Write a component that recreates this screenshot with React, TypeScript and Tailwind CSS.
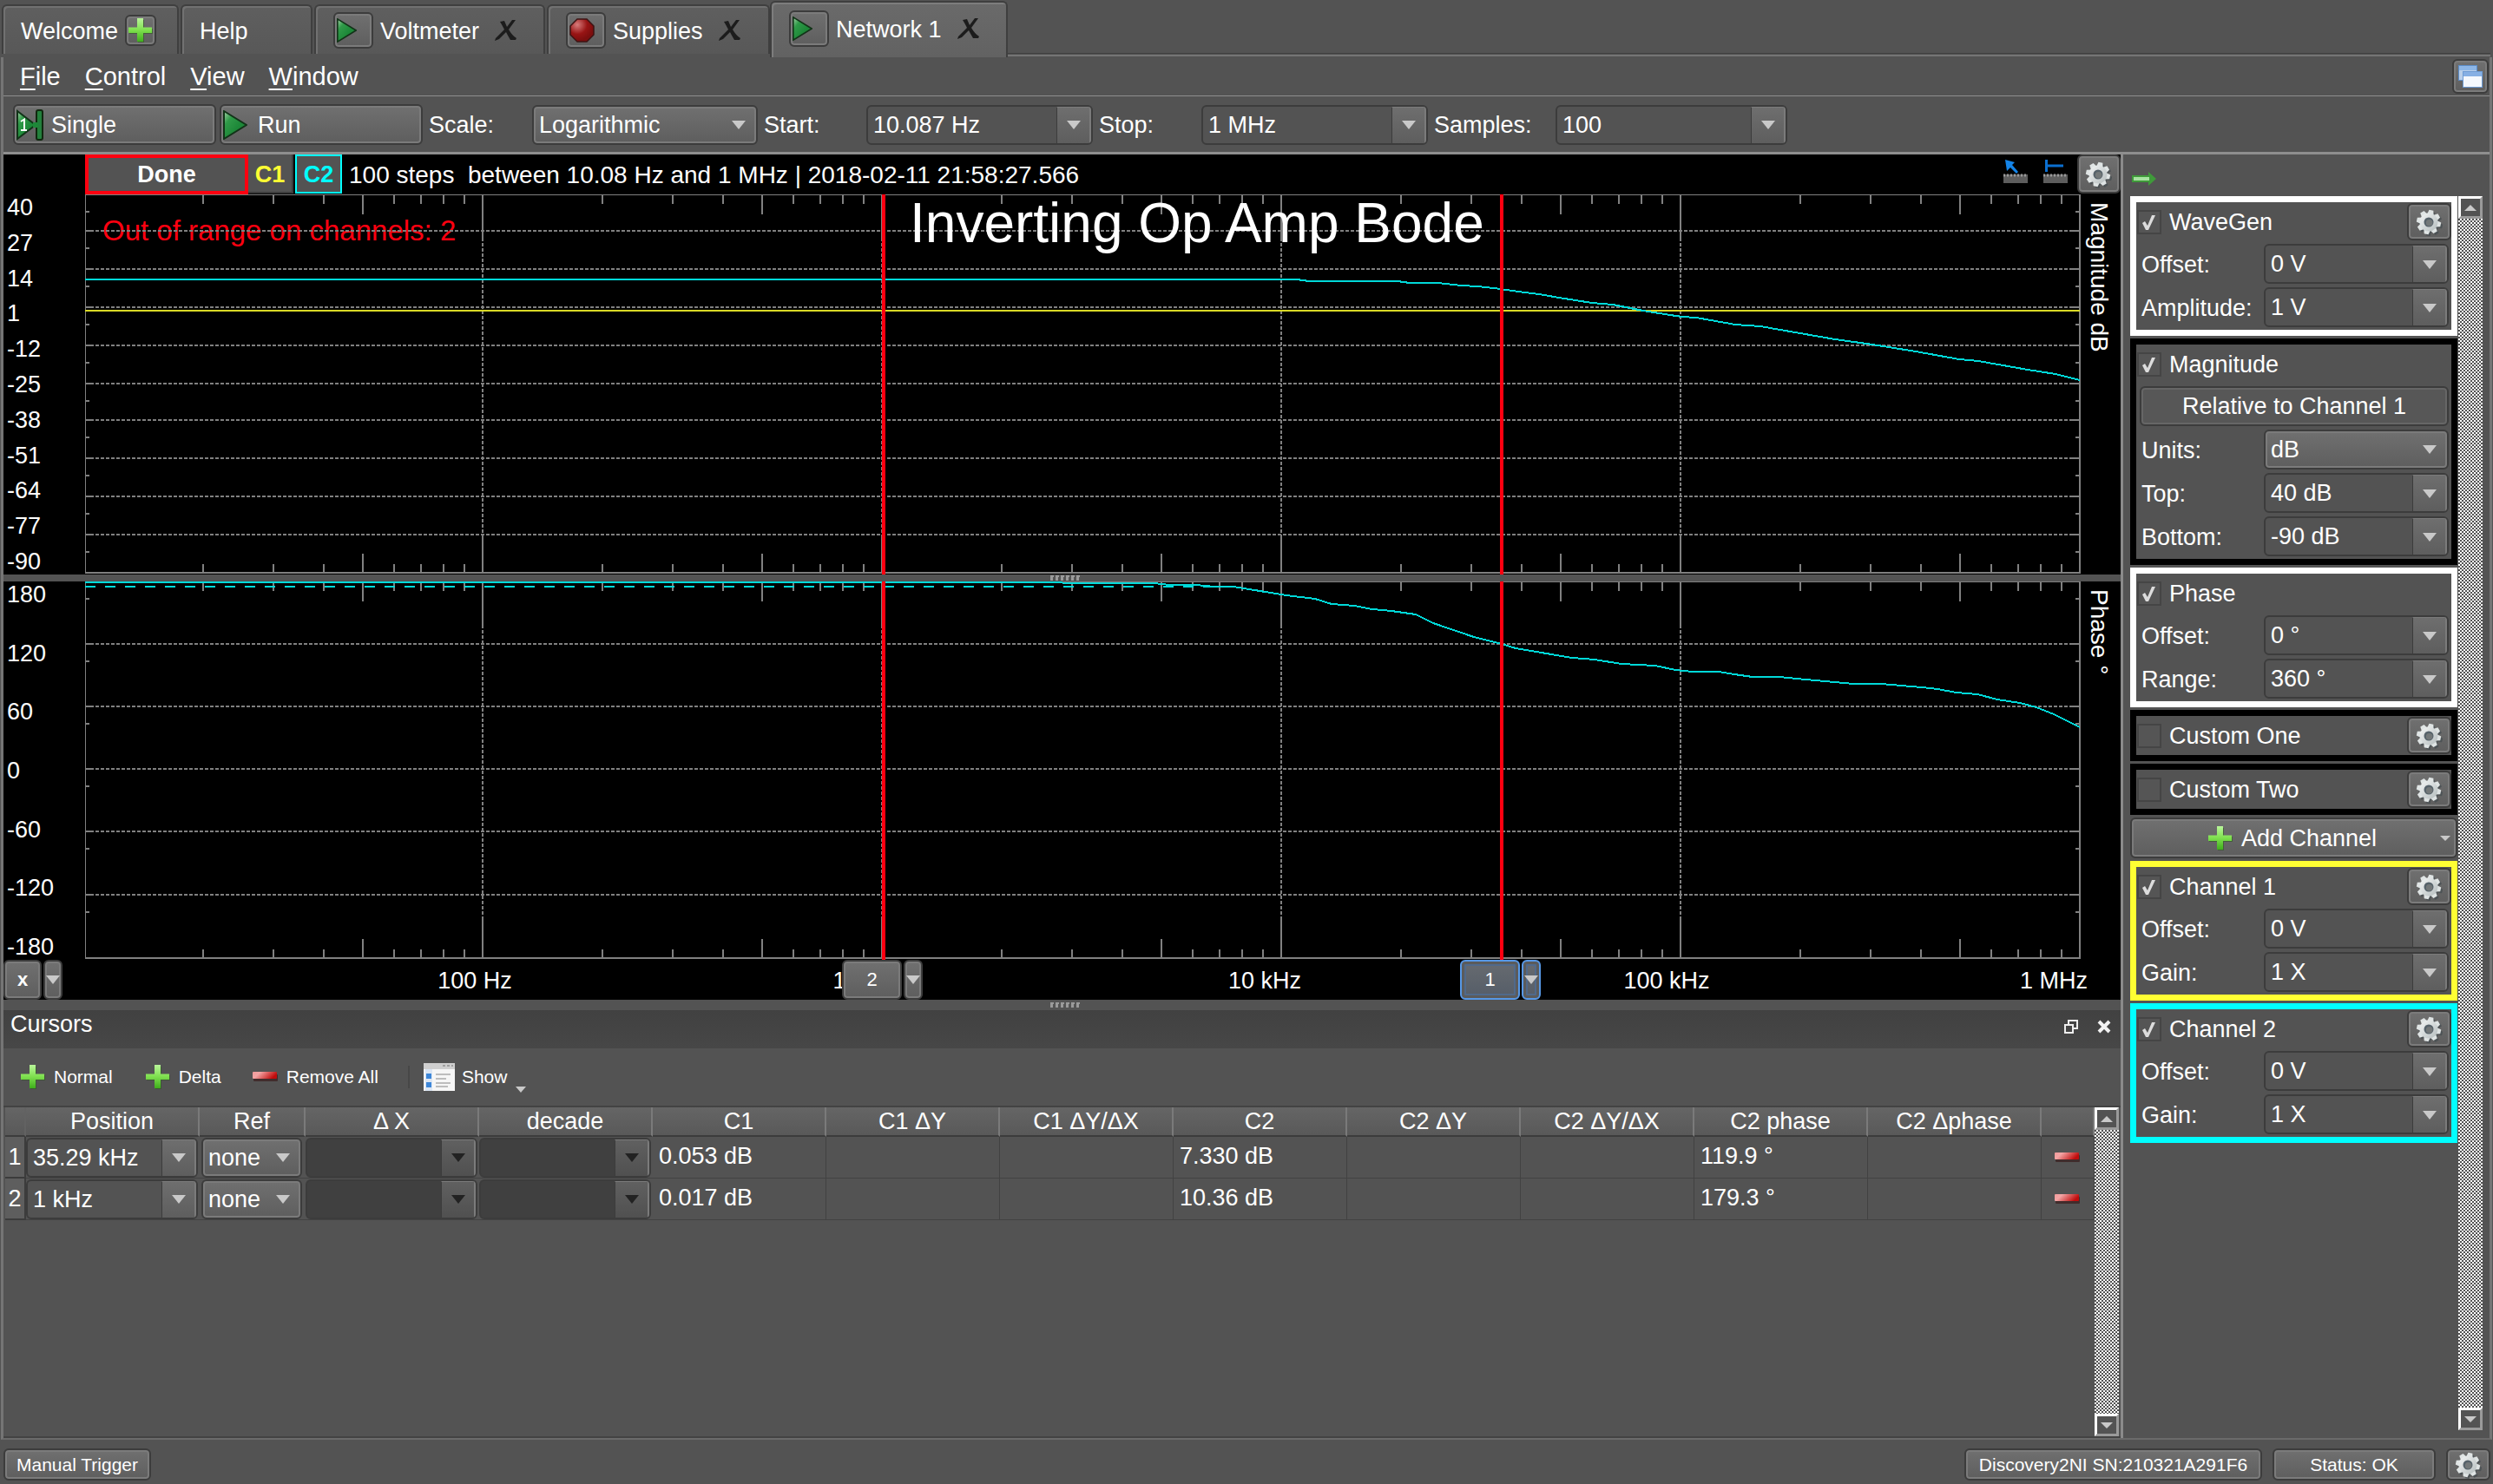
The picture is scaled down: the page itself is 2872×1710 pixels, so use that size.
import { useId } from "react";
import type { ReactNode } from "react";

const RAISED =
  "rounded-md border-2 border-[#3c3c3c] bg-linear-to-b from-[#707070] to-[#5e5e5e] shadow-[inset_0_0_0_2px_#7b7b7b]";

/* ---------- icons ---------- */

function Gear() {
  return (
    <svg viewBox="0 0 32 32" className="h-8 w-8 shrink-0" aria-hidden="true">
      <defs>
        <linearGradient id="gearFill" x1="0" y1="0" x2="1" y2="1">
          <stop offset="0" stopColor="#f4f6f6" />
          <stop offset="1" stopColor="#b4bcbd" />
        </linearGradient>
      </defs>
      <g transform="translate(17 18)" fill="#444c50" opacity="0.7">
        {[0, 45, 90, 135, 180, 225, 270, 315].map((a) => (
          <rect key={a} x="-2.6" y="-14" width="5.2" height="7" rx="1" transform={`rotate(${a + 12})`} />
        ))}
        <circle r="10" />
      </g>
      <g transform="translate(15 16)" fill="url(#gearFill)">
        {[0, 45, 90, 135, 180, 225, 270, 315].map((a) => (
          <path key={a} d="M-4-8 L-2.500-14 H2.500 L4-8Z" fill="#dfe4e4" transform={`rotate(${a + 12})`} />
        ))}
        <circle r="10.500" />
        <circle r="5.500" fill="#56626a" />
        <circle r="3.800" cx="0.600" cy="0.800" fill="#737879" />
      </g>
    </svg>
  );
}

function Plus() {
  return (
    <svg viewBox="0 0 28 28" className="h-7 w-7 shrink-0" aria-hidden="true">
      <defs>
        <linearGradient id="plusFill" x1="0" y1="0" x2="0" y2="1">
          <stop offset="0" stopColor="#b9f59a" />
          <stop offset="0.5" stopColor="#7fe04f" />
          <stop offset="1" stopColor="#3fae1c" />
        </linearGradient>
      </defs>
      <path d="M11 2H18V12H28V18H18V28H11V18H1V12H11Z" fill="#2f5a20" opacity="0.6" />
      <path d="M10 0H17V10.500H27V17H17V27H10V17H0V10.500H10Z" fill="url(#plusFill)" />
    </svg>
  );
}

function Minus() {
  return (
    <svg viewBox="0 0 30 12" className="h-3 w-[30px] shrink-0" aria-hidden="true">
      <defs>
        <linearGradient id="minusFill" x1="0" y1="0" x2="1" y2="0.3">
          <stop offset="0" stopColor="#f09a9a" />
          <stop offset="0.3" stopColor="#f3a5a5" />
          <stop offset="1" stopColor="#c00c0c" />
        </linearGradient>
      </defs>
      <rect x="1" y="3" width="28" height="8" rx="1" fill="#3a1c1c" opacity="0.7" />
      <rect width="28" height="8" rx="1" fill="url(#minusFill)" />
    </svg>
  );
}

function Play({ big = false }: { big?: boolean }) {
  return (
    <svg viewBox="0 0 28 34" className={big ? "h-[34px] w-7" : "h-7 w-[23px]"} aria-hidden="true">
      <defs>
        <linearGradient id="playFill" x1="0" y1="0" x2="0.6" y2="0.6">
          <stop offset="0" stopColor="#a5d3a8" />
          <stop offset="0.45" stopColor="#2f9a48" />
          <stop offset="1" stopColor="#1d8838" />
        </linearGradient>
      </defs>
      <path d="M1 1 L27 17 L1 33Z" fill="url(#playFill)" stroke="#123318" strokeWidth="2" />
    </svg>
  );
}

function SingleIcon() {
  return (
    <svg viewBox="0 0 32 36" className="h-9 w-8" aria-hidden="true">
      <path d="M1 2 L22 18 L1 34Z" fill="url(#playFill)" stroke="#123318" strokeWidth="2" />
      <rect x="23" y="1" width="7" height="34" rx="2" fill="#23803c" stroke="#10280f" strokeWidth="2" />
      <rect x="19" y="15" width="6" height="6" fill="#1d8838" />
      <path d="M5 14 L9 11.500V24M5 24H12" fill="none" stroke="#fff" strokeWidth="2" />
    </svg>
  );
}

function StopIcon() {
  return (
    <svg viewBox="0 0 30 30" className="h-[30px] w-[30px]" aria-hidden="true">
      <defs>
        <radialGradient id="stopFill" cx="0.3" cy="0.25" r="0.7">
          <stop offset="0" stopColor="#d77c7c" />
          <stop offset="0.6" stopColor="#981414" />
          <stop offset="1" stopColor="#7c0e0e" />
        </radialGradient>
      </defs>
      <path d="M9 2H20L28 10V20L20 28H9L1 20V10Z" fill="url(#stopFill)" stroke="#3d1414" strokeWidth="1.500" />
    </svg>
  );
}

function CloseX() {
  return (
    <svg viewBox="0 0 26 26" className="h-[26px] w-[26px]" aria-hidden="true">
      <path d="M24 1 L16 12 Q20 19 25 22 L24 24 L18 24 Q15 19 13 15 L5 23 L0 25 L1 22 L11 12 Q8 6 6 3 L11 2 L14 9 L20 1Z" fill="#1c1c1c" />
    </svg>
  );
}

function Down({ dark = false }: { dark?: boolean }) {
  return (
    <svg viewBox="0 0 16 10" className="h-[10px] w-4 shrink-0" aria-hidden="true">
      <path d="M0 0H16L8 10Z" fill={dark ? "#222222" : "#c9c9c9"} />
    </svg>
  );
}

/* ---------- controls ---------- */

function Combo({ label, value, id, disabled = false }: { label?: string; value: string; id?: string; disabled?: boolean }) {
  return (
    <div className={`flex h-[46px] w-full min-w-0 overflow-hidden rounded-md border-2 border-[#3c3c3c] ${disabled ? "bg-[#404040]" : "bg-[#535353]"}`}>
      <input id={id} aria-label={label} defaultValue={value} disabled={disabled} className="w-0 min-w-0 flex-1 bg-transparent pl-1.5 text-[27px] leading-[30px] text-white outline-none" />
      <button type="button" aria-label="Show values" disabled={disabled} className={`flex w-[40px] shrink-0 items-center justify-center border-t border-r-2 border-l border-t-[#7b7b7b] border-r-[#7b7b7b] border-l-[#3c3c3c] bg-linear-to-b ${disabled ? "from-[#606060] to-[#505050]" : "from-[#6e6e6e] to-[#5e5e5e]"}`}>
        <Down dark={disabled} />
      </button>
    </div>
  );
}

function Select({ id, label, value }: { id?: string; label?: string; value: string }) {
  return (
    <div className={`relative h-[46px] w-full ${RAISED}`}>
      <select id={id} aria-label={label} defaultValue={value} className="h-full w-full appearance-none bg-transparent pl-1.5 text-[27px] text-white outline-none">
        <option>{value}</option>
      </select>
      <span className="pointer-events-none absolute inset-y-0 right-3 flex items-center">
        <Down />
      </span>
    </div>
  );
}

function ToolField({ label, value, labelWidth, width, select = false }: { label: string; value: string; labelWidth: string; width: string; select?: boolean }) {
  const id = useId();
  return (
    <div className="ml-[7px] flex items-center">
      <label htmlFor={id} className={labelWidth}>{label}</label>
      <div className={width}>{select ? <Select id={id} value={value} /> : <Combo id={id} value={value} />}</div>
    </div>
  );
}

function Field({ label, value, select = false }: { label: string; value: string; select?: boolean }) {
  const id = useId();
  return (
    <div className="flex items-center">
      <label htmlFor={id} className="w-[147px] shrink-0 pt-0.5 pl-[6px]">{label}</label>
      <div className="mr-[3px] min-w-0 flex-1">{select ? <Select id={id} value={value} /> : <Combo id={id} value={value} />}</div>
    </div>
  );
}

function Panel({ title, color, checked = true, gear = false, children }: { title: string; color: string; checked?: boolean; gear?: boolean; children?: ReactNode }) {
  return (
    <section className={`border-[7px] bg-[#535353] ${color}`}>
      <div className="flex h-[45px] items-center justify-between">
        <label className="flex items-center gap-[9px] pl-px">
          <span className="relative flex h-7 w-7">
            <input type="checkbox" defaultChecked={checked} className="peer h-7 w-7 appearance-none border-2 border-[#454545] bg-[#555555]" />
            <svg viewBox="0 0 28 28" className="pointer-events-none absolute inset-0 hidden peer-checked:block" aria-hidden="true">
              <path d="M6 15 L9 13 L12 18 L17 6 L21 6 L13 23 L10 23Z" fill="#dcdcdc" />
            </svg>
          </span>
          <span className="pt-px">{title}</span>
        </label>
        {gear && (
          <button type="button" aria-label={`${title} settings`} className={`flex h-[43px] w-[51px] items-center justify-center ${RAISED}`}>
            <Gear />
          </button>
        )}
      </div>
      {children && <div className="flex flex-col gap-1 pt-[3px] pb-[3px]">{children}</div>}
    </section>
  );
}

function Scrollbar() {
  const btn = "flex h-[26px] w-full items-center justify-center border-[3px] border-t-white border-l-white border-r-[#9a9a9a] border-b-[#9a9a9a] bg-[#535353]";
  return (
    <div className="flex w-7 shrink-0 flex-col bg-[conic-gradient(#535353_25%,#ffffff_0_50%,#535353_0_75%,#ffffff_0)] bg-[length:4px_4px]">
      <button type="button" aria-label="Scroll up" className={btn}>
        <svg viewBox="0 0 14 7" className="h-[7px] w-[14px]"><path d="M0 7H14L7 0Z" fill="#c9c9c9" /></svg>
      </button>
      <div className="flex-1" />
      <button type="button" aria-label="Scroll down" className={btn}>
        <svg viewBox="0 0 14 7" className="h-[7px] w-[14px]"><path d="M0 0H14L7 7Z" fill="#c9c9c9" /></svg>
      </button>
    </div>
  );
}

function Tab({ icon, title, width }: { icon: ReactNode; title: string; width: string }) {
  return (
    <div className={`flex h-[57px] items-center rounded-t-md border-x-2 border-t-2 border-[#3f3f3f] bg-linear-to-b from-[#5f5f5f] to-[#585858] pl-5 shadow-[inset_2px_2px_0_#717171] ${width}`}>
      <button type="button" aria-label={`Run ${title}`} className={`flex h-[42px] w-[46px] items-center pl-0.5 ${RAISED}`}>{icon}</button>
      <button type="button" className="ml-2 pt-0.5">{title}</button>
      <button type="button" aria-label={`Close ${title}`} className="ml-[18px]"><CloseX /></button>
    </div>
  );
}

/* ---------- plots ---------- */

const DECADE = 460;
const DECADES = [0, 1, 2, 3, 4];
const CURSORS = [920, 1632];

function Grid({ bottom, rows }: { bottom: number; rows: number[] }) {
  return (
    <g stroke="#808080" strokeWidth="2" fill="none">
      {rows.map((y) => (
        <g key={y}>
          <path d={`M0 ${y}H2298`} strokeDasharray="4 2" />
          <path d={`M0 ${y}H8M2286 ${y}H2298`} />
        </g>
      ))}
      {[0, ...rows].map((y) => (
        <path key={y} d={`M0 ${y + 20}H5M2293 ${y + 20}H2298`} />
      ))}
      {DECADES.map((d) => {
        const x0 = -2 + d * DECADE;
        return (
          <g key={d}>
            {[2, 3, 4, 5, 6, 7, 8, 9].map((k) => {
              const x = Math.round(x0 + DECADE * Math.log10(k));
              const h = k === 5 ? 22 : 10;
              return <path key={k} d={`M${x} 1V${h + 1}M${x} ${bottom}V${bottom - h}`} />;
            })}
            {d > 0 && (
              <>
                <path d={`M${x0} 1V50M${x0} ${bottom}V${bottom - 44}`} />
                <path d={`M${x0} 50V${bottom - 44}`} strokeDasharray="4 2" />
              </>
            )}
          </g>
        );
      })}
      <path d={`M0 0.500H2299M0.500 0V${bottom}`} strokeWidth="1" />
      <path d={`M0 ${bottom}H2299M2298 0V${bottom}`} />
    </g>
  );
}

function CursorLines({ bottom }: { bottom: number }) {
  return (
    <g stroke="#ff0010" strokeWidth="4">
      {CURSORS.map((x) => (
        <path key={x} d={`M${x} 0V${bottom}`} />
      ))}
    </g>
  );
}

const MAG =
  "0,98 1396,98 1410,100 1512,100 1526,102 1559,102 1585,105 1604,106 1631,109 1651,112 1675,115 1698,119 1736,125 1760,127 1795,134 1826,139 1840,141 1856,142 1901,150 1930,152 2016,167 2038,170 2059,173 2109,181 2159,190 2181,192 2238,202 2270,207 2298,214";
const PHASE =
  "0,1 1119,1 1132,2 1232,2 1249,4 1280,4 1301,6 1323,6 1384,16 1417,20 1436,26 1462,28 1483,32 1505,34 1533,38 1553,48 1600,64 1632,72 1648,77 1713,88 1739,90 1770,95 1809,97 1832,102 1852,104 1882,104 1900,107 1921,110 1952,110 1982,113 2038,118 2069,118 2116,122 2134,124 2156,128 2180,130 2203,136 2229,140 2248,145 2268,153 2298,168";

function AxisLabels({ values }: { values: string[] }) {
  return (
    <div className="flex w-[94px] shrink-0 flex-col justify-between py-0.5 pl-1 leading-[26px]">
      {values.map((v) => (
        <span key={v}>{v}</span>
      ))}
    </div>
  );
}

function SideLabel({ children }: { children: string }) {
  return (
    <div className="flex w-[45px] shrink-0 items-center pt-[9px] pr-1.5 text-[28px] [writing-mode:vertical-rl]">{children}</div>
  );
}

function Grip() {
  return (
    <svg viewBox="0 0 36 6" className="h-1.5 w-9" aria-hidden="true">
      {[0, 6, 12, 18, 24, 30].map((x) => (
        <path key={x} d={`M${x} 0H${x + 4}V2H${x + 3}V6H${x}Z`} fill="#9a9a9a" />
      ))}
    </svg>
  );
}

function Handle({ text, active = false, width = "w-[69px]" }: { text: string; active?: boolean; width?: string }) {
  const tone = active
    ? "rounded-md border-2 border-[#5798e6] bg-linear-to-b from-[#676b70] to-[#555d68] shadow-[inset_0_0_0_3px_#5b5b5b,inset_0_0_0_5px_#50698a]"
    : RAISED;
  return (
    <div className="flex gap-0.5">
      <button type="button" className={`h-[46px] text-[22px] ${width} ${tone}`}>{text}</button>
      <button type="button" aria-label={`Cursor ${text} menu`} className={`flex h-[46px] w-[22px] items-center justify-center ${tone}`}>
        <Down />
      </button>
    </div>
  );
}

const X_LABELS = [
  { text: "100 Hz", at: 449 },
  { text: "1 kHz", at: 896 },
  { text: "10 kHz", at: 1359 },
  { text: "100 kHz", at: 1822 },
  { text: "1 MHz", at: 2268 },
];

function Plots() {
  return (
    <div className="bg-black">
      <div className="flex h-[46px] items-start">
        <div className="w-[94px]" />
        <button type="button" className="h-[46px] w-[188px] border-4 border-[#ff0010] bg-[#535353] font-bold">Done</button>
        <button type="button" className="mr-0.5 h-[45px] w-[52px] border-r-2 border-b-2 border-[#3c3c3c] bg-[#535353] pt-0.5 font-bold text-[#ffff33]">C1</button>
        <button type="button" className="h-[45px] w-[54px] border-2 border-[#00ffff] bg-[#535353] font-bold text-[#00ffff]">C2</button>
        <p className="ml-2 pt-2 text-[28px] leading-8 whitespace-pre">100 steps  between 10.08 Hz and 1 MHz | 2018-02-11 21:58:27.566</p>
        <div className="ml-auto flex items-start">
          <button type="button" aria-label="Pointer readout" className="mt-1.5 mr-[18px]">
            <svg viewBox="0 0 28 28" className="h-7 w-7">
              <path d="M2 0 L13 3 L10 6 L17 14 L15 16 L8 9 L4 13Z" fill="#1484e8" />
              <rect y="17" width="28" height="10" fill="#5d5d5d" />
              <path d="M0 18H28" stroke="#9a9a9a" strokeWidth="3" strokeDasharray="2 2" />
            </svg>
          </button>
          <button type="button" aria-label="Axis readout" className="mt-1.5 mr-[11px]">
            <svg viewBox="0 0 28 28" className="h-7 w-7">
              <path d="M3.500 0V14M3 7H23" stroke="#0b6fd0" strokeWidth="3" />
              <rect y="17" width="28" height="10" fill="#5d5d5d" />
              <path d="M0 18H28" stroke="#9a9a9a" strokeWidth="3" strokeDasharray="2 2" />
            </svg>
          </button>
          <button type="button" aria-label="Plot settings" className={`flex h-[45px] w-[50px] items-center justify-center ${RAISED}`}>
            <Gear />
          </button>
        </div>
      </div>

      <div className="flex h-[438px]">
        <AxisLabels values={["40", "27", "14", "1", "-12", "-25", "-38", "-51", "-64", "-77", "-90"]} />
        <div className="relative min-w-0 flex-1">
          <p className="absolute top-[22px] left-5 text-[33px] leading-[40px] text-[#ff0010]">Out of range on channels: 2</p>
          <svg viewBox="0 0 2300 438" preserveAspectRatio="none" className="absolute inset-0 h-full w-full" shapeRendering="crispEdges" role="img" aria-label="Magnitude plot">
            <Grid bottom={436} rows={[42, 86, 130, 174, 218, 260, 304, 348, 392]} />
            <path d="M0 134H2298" stroke="#d9d926" strokeWidth="2" />
            <polyline points={MAG} fill="none" stroke="#00d9d9" strokeWidth="2" />
            <CursorLines bottom={438} />
          </svg>
          <h1 className="absolute top-0 left-[950px] text-[64px] leading-[66px] whitespace-nowrap">Inverting Op Amp Bode</h1>
        </div>
        <SideLabel>Magnitude dB</SideLabel>
      </div>

      <div className="flex h-2 items-center justify-center bg-[#535353] pl-2"><Grip /></div>

      <div className="flex h-[436px]">
        <AxisLabels values={["180", "120", "60", "0", "-60", "-120", "-180"]} />
        <div className="relative min-w-0 flex-1">
          <svg viewBox="0 0 2300 436" preserveAspectRatio="none" className="absolute inset-0 h-full w-full" shapeRendering="crispEdges" role="img" aria-label="Phase plot">
            <Grid bottom={434} rows={[72, 144, 216, 288, 361]} />
            <path d="M0 6H1300" stroke="#00d9d9" strokeWidth="2" strokeDasharray="12 11" />
            <polyline points={PHASE} fill="none" stroke="#00d9d9" strokeWidth="2" />
            <CursorLines bottom={436} />
          </svg>
        </div>
        <SideLabel>Phase °</SideLabel>
      </div>

      <div className="flex h-[46px]">
        <div className="w-[94px] shrink-0 font-bold">
          <Handle text="x" width="w-[44px]" />
        </div>
        <div className="relative min-w-0 flex-1">
          {X_LABELS.map((l) => (
            <span key={l.text} className="absolute top-[9px] -translate-x-1/2 leading-[30px] whitespace-nowrap" style={{ left: `${(l.at / 2300) * 100}%` }}>
              {l.text}
            </span>
          ))}
          <div className="absolute top-0" style={{ left: `${(872 / 2300) * 100}%` }}><Handle text="2" /></div>
          <div className="absolute top-0" style={{ left: `${(1584 / 2300) * 100}%` }}><Handle text="1" active /></div>
        </div>
        <div className="w-[45px] shrink-0" />
      </div>
    </div>
  );
}

/* ---------- cursors ---------- */

const COLUMNS = ["Position", "Ref", "Δ X", "decade", "C1", "C1 ΔY", "C1 ΔY/ΔX", "C2", "C2 ΔY", "C2 ΔY/ΔX", "C2 phase", "C2 Δphase"];
const ROWS = [
  { n: 1, position: "35.29 kHz", cells: ["0.053 dB", "", "", "7.330 dB", "", "", "119.9 °", ""] },
  { n: 2, position: "1 kHz", cells: ["0.017 dB", "", "", "10.36 dB", "", "", "179.3 °", ""] },
];

function Cursors() {
  const th = "h-[34px] border-r-2 border-b-2 border-r-[#7a7a7a] border-b-[#3c3c3c] bg-linear-to-b from-[#656565] to-[#595959] p-0 text-center font-normal leading-8";
  return (
    <section className="flex flex-1 flex-col border-b-2 border-[#434343]">
      <div className="flex h-11 items-start justify-between bg-linear-to-b from-[#414141] to-[#474747] pt-px pr-[9px] pl-2">
        <h2 className="leading-[30px]">Cursors</h2>
        <div className="flex gap-[18px] pt-2">
          <button type="button" aria-label="Float panel">
            <svg viewBox="0 0 20 20" className="h-5 w-5"><path d="M7 7V3H17V12H13M3 8H12V17H3Z" fill="none" stroke="#ededed" strokeWidth="2" /></svg>
          </button>
          <button type="button" aria-label="Close panel">
            <svg viewBox="0 0 20 20" className="h-5 w-5"><path d="M4 4 L16 16 M16 4 L4 16" stroke="#f2f2f2" strokeWidth="4" /></svg>
          </button>
        </div>
      </div>
      <div className="flex h-[66px] items-center pl-5 text-[21px]">
        <button type="button" className="flex items-center gap-2.5"><Plus />Normal</button>
        <button type="button" className="ml-[38px] flex items-center gap-2.5"><Plus />Delta</button>
        <button type="button" className="ml-9 flex items-center gap-[9px]"><Minus />Remove All</button>
        <div className="mr-4 ml-[34px] h-[26px] w-0.5 bg-[#474747]" />
        <button type="button" className="flex items-center gap-2">
          <svg viewBox="0 0 36 32" className="h-8 w-9" aria-hidden="true">
            <rect width="36" height="32" fill="#f6f6f6" />
            <rect width="36" height="7" fill="#cfcfcf" />
            <path d="M22 3H25M27 3H30M32 3H34" stroke="#9f9f9f" strokeWidth="2" />
            <rect x="2" y="7" width="8" height="25" fill="#dbe6f4" />
            <rect x="3" y="12" width="6" height="6" fill="#3d86d8" />
            <rect x="3" y="22" width="6" height="6" fill="#3d86d8" />
            <path d="M14 13H31M14 18H26M14 23H31M14 27H28" stroke="#bdbdbd" strokeWidth="2" />
          </svg>
          Show
          <svg viewBox="0 0 12 7" className="mt-7 ml-0.5 h-[7px] w-3" aria-hidden="true"><path d="M0 0H12L6 7Z" fill="#c9c9c9" /></svg>
        </button>
      </div>
      <div className="flex flex-1 border-t-2 border-[#434343]">
        <div className="min-w-0 flex-1 pl-0.5">
          <table className="w-full table-fixed border-separate border-spacing-0">
            <colgroup>
              <col className="w-6" />
              <col className="w-[200px]" />
              <col className="w-[122px]" />
              {COLUMNS.slice(2).map((c) => (
                <col key={c} className="w-[200px]" />
              ))}
              <col />
            </colgroup>
            <thead>
              <tr>
                <th className={th.replace("border-r-[#7a7a7a]", "border-r-[#626262]")} />
                {COLUMNS.map((c) => (
                  <th key={c} className={th}>{c}</th>
                ))}
                <th className={th} />
              </tr>
            </thead>
            <tbody>
              {ROWS.map((r) => (
                <tr key={r.n} className="h-12">
                  <th className="border-r-2 border-b-2 border-[#3c3c3c] bg-[#5e5e5e] p-0 text-center font-normal">{r.n}</th>
                  <td className="border-b border-[#424242] p-0 pr-0.5"><Combo label={`Cursor ${r.n} position`} value={r.position} /></td>
                  <td className="border-b border-[#424242] p-0 pr-1 pl-0.5"><Select label={`Cursor ${r.n} reference`} value="none" /></td>
                  <td className="border-b border-[#424242] p-0 pr-0.5"><Combo label={`Cursor ${r.n} delta X`} value="" disabled /></td>
                  <td className="border-b border-[#424242] p-0 pr-0.5"><Combo label={`Cursor ${r.n} decade`} value="" disabled /></td>
                  {r.cells.map((c, i) => (
                    <td key={i} className="border-r border-b border-[#424242] px-[7px] py-0 pb-1 whitespace-nowrap">{c}</td>
                  ))}
                  <td className="border-r border-b border-[#424242] p-0 pl-[15px]">
                    <button type="button" aria-label={`Remove cursor ${r.n}`} className="block"><Minus /></button>
                  </td>
                </tr>
              ))}
            </tbody>
          </table>
        </div>
        <Scrollbar />
        <div className="w-0.5" />
      </div>
    </section>
  );
}

/* ---------- page ---------- */

const MENUS = [
  ["F", "ile"],
  ["C", "ontrol"],
  ["V", "iew"],
  ["W", "indow"],
];

export default function App() {
  return (
    <div className="flex min-h-screen flex-col bg-[#535353] font-['Liberation_Sans',Arial,sans-serif] text-[27px] leading-[30px] text-white">
      <nav className="flex h-[66px] items-start pt-px pl-0.5">
        <div className="mt-1 mr-0.5 flex h-[57px] w-[204px] items-center rounded-t-md border-x-2 border-t-2 border-[#3f3f3f] bg-linear-to-b from-[#5f5f5f] to-[#585858] pl-5 shadow-[inset_2px_2px_0_#717171]">
          <button type="button" className="pt-0.5">Welcome</button>
          <button type="button" aria-label="New instrument" className={`ml-2 flex h-9 w-9 items-center justify-center ${RAISED}`}><Plus /></button>
        </div>
        <div className="mt-1 mr-0.5 flex h-[57px] w-[152px] items-center rounded-t-md border-x-2 border-t-2 border-[#3f3f3f] bg-linear-to-b from-[#5f5f5f] to-[#585858] pl-5 shadow-[inset_2px_2px_0_#717171]">
          <button type="button" className="pt-0.5">Help</button>
        </div>
        <div className="mt-1 mr-0.5"><Tab icon={<Play />} title="Voltmeter" width="w-[266px]" /></div>
        <div className="mt-1"><Tab icon={<StopIcon />} title="Supplies" width="w-[257px]" /></div>
        <div className="flex h-[65px] w-[274px] items-center rounded-t-md border-x-2 border-t-2 border-[#3f3f3f] bg-linear-to-b from-[#6a6a6a] to-[#626262] pb-1 pl-5 shadow-[inset_2px_2px_0_#7d7d7d]">
          <button type="button" aria-label="Run Network 1" className={`flex h-[42px] w-[46px] items-center pl-0.5 ${RAISED}`}><Play /></button>
          <button type="button" className="ml-2 pt-0.5 whitespace-nowrap">Network 1</button>
          <button type="button" aria-label="Close Network 1" className="ml-[18px]"><CloseX /></button>
        </div>
        <div className="mt-[60px] mr-[3px] h-1 flex-1 border-t border-b-2 border-t-[#3f3f3f] border-b-[#757575]" />
      </nav>

      <div className="mx-px flex flex-1 flex-col border-x-[3px] border-b-2 border-x-[#757575] border-b-[#6a6a6a]">
        <div className="flex h-[45px] items-center justify-between border-b border-[#8e8e8e] pr-px pl-[19px]">
          <div className="flex gap-[28px] pb-px text-[29px] leading-8">
            {MENUS.map(([k, rest]) => (
              <button key={rest} type="button" className="whitespace-nowrap"><span className="underline decoration-2 underline-offset-4">{k}</span>{rest}</button>
            ))}
          </div>
          <button type="button" aria-label="Windows" className={`flex h-[40px] w-[42px] items-center justify-center ${RAISED}`}>
            <svg viewBox="0 0 28 26" className="h-[26px] w-7" aria-hidden="true">
              <rect x="0.500" y="0.500" width="21" height="17" fill="#b9cfe9" stroke="#5b8cc8" />
              <rect x="1" y="1" width="20" height="5" fill="#8db6e6" />
              <rect x="5.500" y="7.500" width="22" height="18" fill="#f4f8fd" stroke="#6d9bd4" />
              <rect x="6" y="8" width="21" height="5" fill="#86b0e4" />
            </svg>
          </button>
        </div>

        <div className="flex h-[67px] items-center border-b-[3px] border-[#8e8e8e] pt-px pl-[11px]">
          <button type="button" className={`flex h-[47px] w-[234px] items-center gap-2 pl-0.5 ${RAISED}`}><SingleIcon />Single</button>
          <button type="button" className={`ml-1 flex h-[47px] w-[234px] items-center gap-3 pl-0.5 ${RAISED}`}><Play big />Run</button>
          <ToolField label="Scale:" value="Logarithmic" labelWidth="w-[119px]" width="w-[260px]" select />
          <ToolField label="Start:" value="10.087 Hz" labelWidth="w-[118px]" width="w-[261px]" />
          <ToolField label="Stop:" value="1 MHz" labelWidth="w-[118px]" width="w-[261px]" />
          <ToolField label="Samples:" value="100" labelWidth="w-[140px]" width="w-[267px]" />
        </div>

        <div className="flex flex-1">
          <main className="flex min-w-0 flex-1 flex-col">
            <Plots />
            <div className="flex h-3 items-center justify-center pl-2"><Grip /></div>
            <Cursors />
          </main>

          <aside className="flex w-[425px] shrink-0 flex-col border-l-[3px] border-[#8a8a8a] pb-[9px] pl-2">
            <div className="flex h-12 items-center pt-2 pl-0.5">
              <button type="button" aria-label="Collapse panel">
                <svg viewBox="0 0 28 16" className="h-4 w-7"><path d="M0 4H19V0L28 8L19 16V12H0Z" fill="#3f9a3a" /><path d="M2 6H20V10H2Z" fill="#a6e3a0" /></svg>
              </button>
            </div>
            <div className="flex flex-1">
              <div className="mr-px flex min-w-0 flex-1 flex-col gap-[3px]">
                <Panel title="WaveGen" color="border-white" gear>
                  <Field label="Offset:" value="0 V" />
                  <Field label="Amplitude:" value="1 V" />
                </Panel>
                <Panel title="Magnitude" color="border-black">
                  <button type="button" className="mr-[3px] ml-1 h-[46px] rounded-md border-2 border-[#3c3c3c] bg-[#575757] shadow-[inset_0_0_0_2px_#666666]">Relative to Channel 1</button>
                  <Field label="Units:" value="dB" select />
                  <Field label="Top:" value="40 dB" />
                  <Field label="Bottom:" value="-90 dB" />
                </Panel>
                <Panel title="Phase" color="border-white">
                  <Field label="Offset:" value="0 °" />
                  <Field label="Range:" value="360 °" />
                </Panel>
                <Panel title="Custom One" color="border-black" checked={false} gear />
                <Panel title="Custom Two" color="border-black" checked={false} gear />
                <button type="button" className={`flex h-[47px] items-center pr-1.5 pl-[88px] ${RAISED}`}>
                  <Plus />
                  <span className="ml-2.5">Add Channel</span>
                  <svg viewBox="0 0 12 6" className="ml-auto h-1.5 w-3" aria-hidden="true"><path d="M0 0H12L6 6Z" fill="#c9c9c9" /></svg>
                </button>
                <Panel title="Channel 1" color="border-[#ffff33]" gear>
                  <Field label="Offset:" value="0 V" />
                  <Field label="Gain:" value="1 X" />
                </Panel>
                <Panel title="Channel 2" color="border-[#00ffff]" gear>
                  <Field label="Offset:" value="0 V" />
                  <Field label="Gain:" value="1 X" />
                </Panel>
              </div>
              <Scrollbar />
              <div className="w-2" />
            </div>
          </aside>
        </div>
      </div>

      <footer className="flex h-[51px] items-end pr-[3px] pb-1 pl-1 text-[21px]">
        <button type="button" className={`h-[37px] w-[170px] ${RAISED}`}>Manual Trigger</button>
        <button type="button" className={`ml-auto h-[37px] w-[343px] ${RAISED}`}>Discovery2NI SN:210321A291F6</button>
        <button type="button" className={`ml-3 h-[37px] w-[188px] ${RAISED}`}>Status: OK</button>
        <button type="button" aria-label="Device settings" className={`ml-3 flex h-[37px] w-[51px] items-center justify-center ${RAISED}`}><Gear /></button>
      </footer>
    </div>
  );
}
